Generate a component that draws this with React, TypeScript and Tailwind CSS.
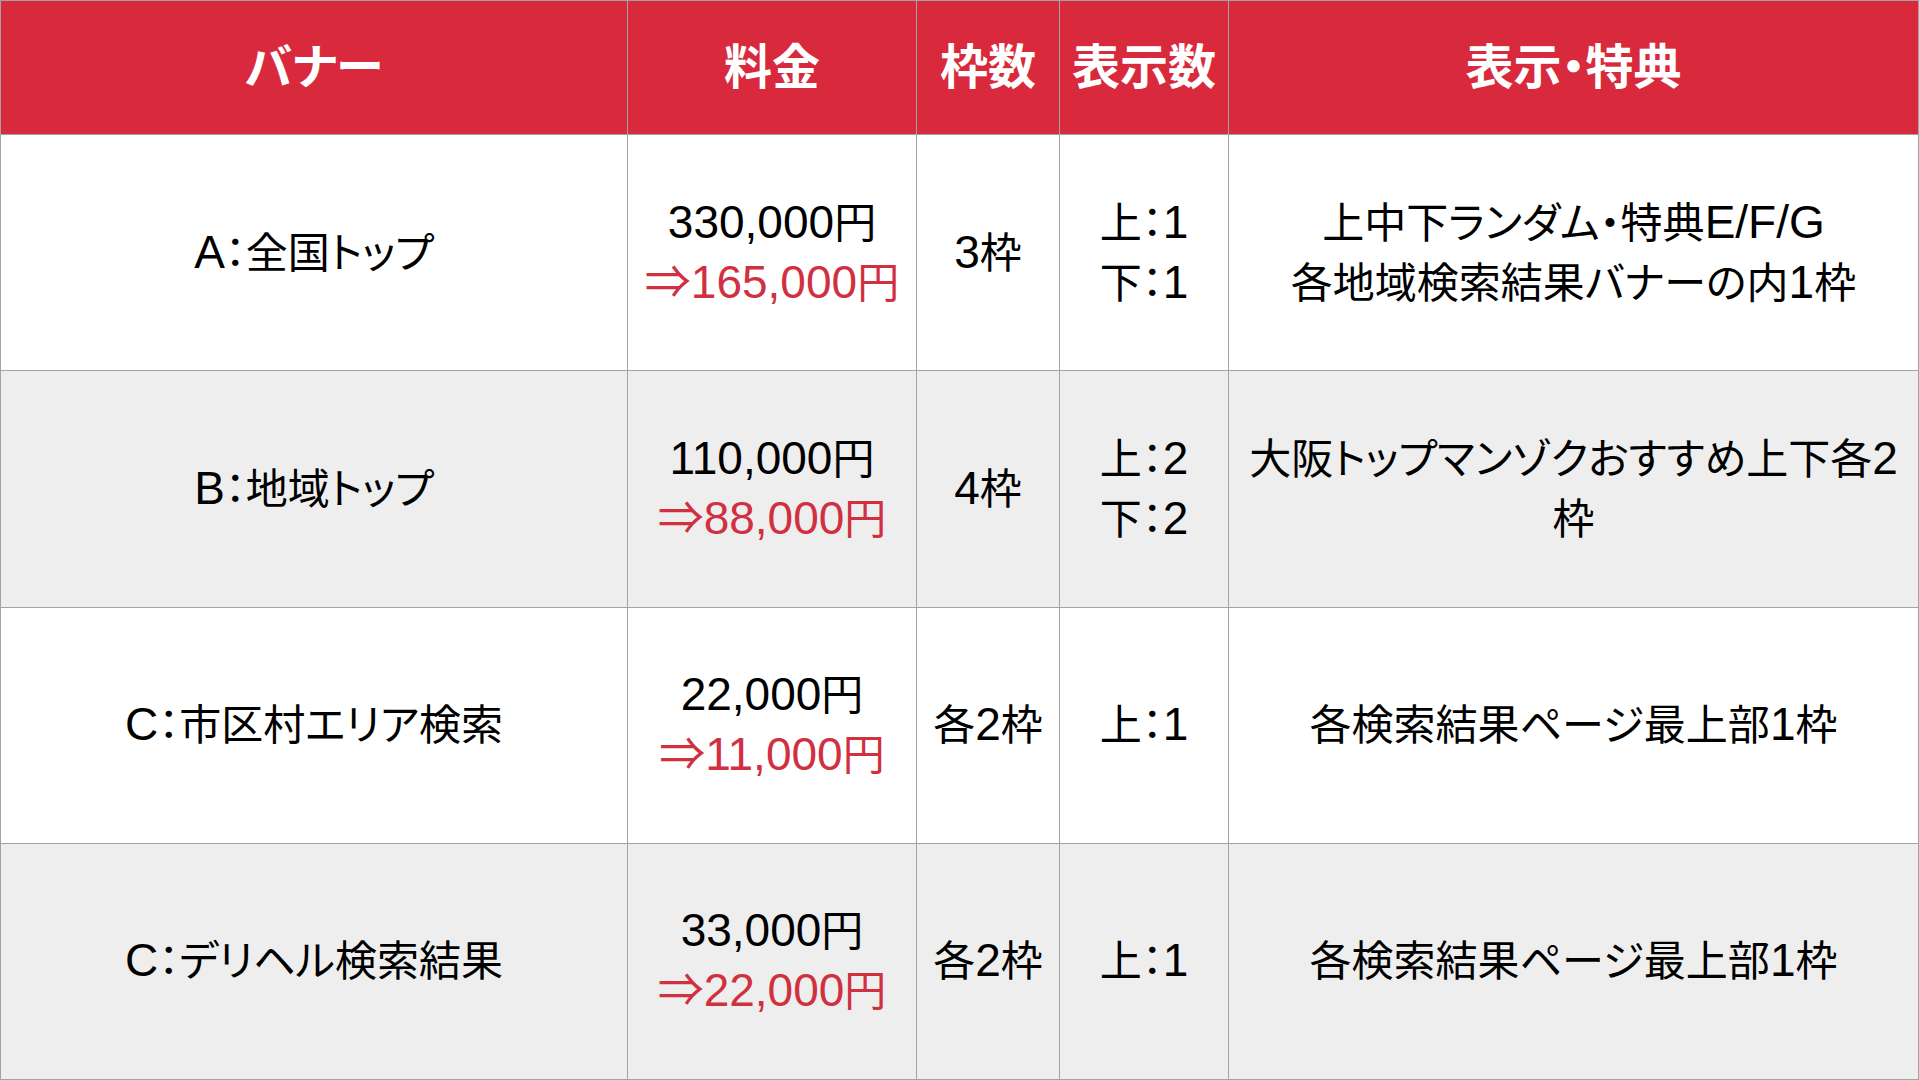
import React from "react";

type Fila = {
  banner: string;
  precio: string;
  descuento: string;
  marcos: string;
  visibles: string[];
  detalle: string[];
};

const FILAS: Fila[] = [
  {
    banner: "A：全国トップ",
    precio: "330,000円",
    descuento: "⇒165,000円",
    marcos: "3枠",
    visibles: ["上：1", "下：1"],
    detalle: ["上中下ランダム・特典E/F/G", "各地域検索結果バナーの内1枠"],
  },
  {
    banner: "B：地域トップ",
    precio: "110,000円",
    descuento: "⇒88,000円",
    marcos: "4枠",
    visibles: ["上：2", "下：2"],
    detalle: ["大阪トップマンゾクおすすめ上下各2", "枠"],
  },
  {
    banner: "C：市区村エリア検索",
    precio: "22,000円",
    descuento: "⇒11,000円",
    marcos: "各2枠",
    visibles: ["上：1"],
    detalle: ["各検索結果ページ最上部1枠"],
  },
  {
    banner: "C：デリヘル検索結果",
    precio: "33,000円",
    descuento: "⇒22,000円",
    marcos: "各2枠",
    visibles: ["上：1"],
    detalle: ["各検索結果ページ最上部1枠"],
  },
];

const CABECERAS = ["バナー", "料金", "枠数", "表示数", "表示・特典"];

const CELDA =
  "flex flex-col items-center justify-center border-r border-b border-[#a3a3a3] text-center whitespace-nowrap";

// Los glifos japoneses de la referencia son más estrechos que los latinos,
// así que los tramos CJK van un poco más pequeños.
const CJK = /([\u3000-\u30ff\u4e00-\u9fff\uff00-\uffef]+)/;

function Texto({ t }: { t: string }) {
  return (
    <span>
      {t.split(CJK).map((parte, i) =>
        CJK.test(parte) ? (
          <span key={i} className="text-[42px]">
            {parte}
          </span>
        ) : (
          parte
        ),
      )}
    </span>
  );
}

export default function App() {
  return (
    <div className="grid h-[1080px] w-[1919px] grid-cols-[627px_289px_143px_169px_1fr] grid-rows-[134px_repeat(4,1fr)] overflow-hidden border-t border-l border-[#a3a3a3] bg-white font-['Liberation_Sans','Noto_Sans_CJK_JP',sans-serif] text-[46px] leading-[58px] text-black [font-feature-settings:'palt']">
      {CABECERAS.map((c) => (
        <div key={c} className={`${CELDA} bg-[#d82a3c] text-[48px] font-bold text-white`}>
          {c}
        </div>
      ))}

      {FILAS.map((f, i) => {
        const fondo = i % 2 === 1 ? "bg-[#eeeeee]" : "bg-white";
        return (
          <React.Fragment key={f.banner}>
            <div className={`${CELDA} ${fondo}`}>
              <Texto t={f.banner} />
            </div>
            <div className={`${CELDA} ${fondo}`}>
              <Texto t={f.precio} />
              <span className="text-[#d0303f]">
                <Texto t={f.descuento} />
              </span>
            </div>
            <div className={`${CELDA} ${fondo}`}>
              <Texto t={f.marcos} />
            </div>
            <div className={`${CELDA} ${fondo}`}>
              {f.visibles.map((v) => (
                <Texto key={v} t={v} />
              ))}
            </div>
            <div className={`${CELDA} ${fondo}`}>
              {f.detalle.map((d) => (
                <Texto key={d} t={d} />
              ))}
            </div>
          </React.Fragment>
        );
      })}
    </div>
  );
}
